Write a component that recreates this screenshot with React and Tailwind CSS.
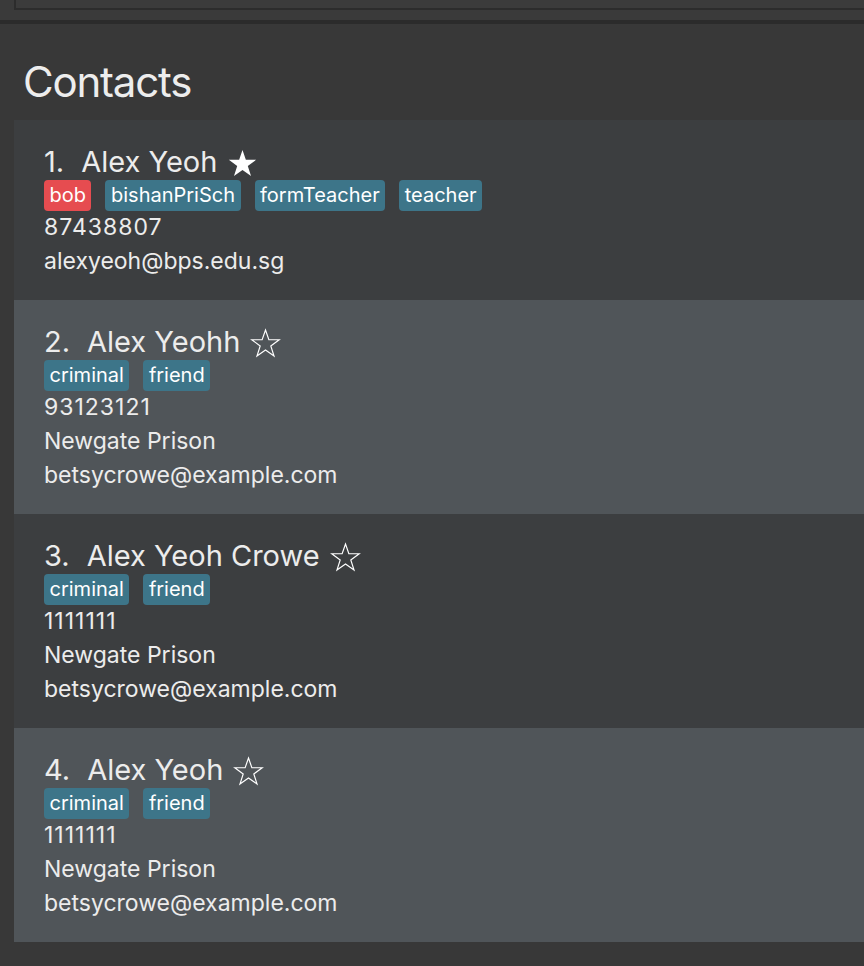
import React from "react";

const contacts = [
  {
    name: "Alex Yeoh",
    fav: true,
    tags: [
      { label: "bob", red: true },
      { label: "bishanPriSch" },
      { label: "formTeacher" },
      { label: "teacher" },
    ],
    phone: "87438807",
    email: "alexyeoh@bps.edu.sg",
  },
  {
    name: "Alex Yeohh",
    tags: [{ label: "criminal" }, { label: "friend" }],
    phone: "93123121",
    address: "Newgate Prison",
    email: "betsycrowe@example.com",
  },
  {
    name: "Alex Yeoh Crowe",
    tags: [{ label: "criminal" }, { label: "friend" }],
    phone: "1111111",
    address: "Newgate Prison",
    email: "betsycrowe@example.com",
  },
  {
    name: "Alex Yeoh",
    tags: [{ label: "criminal" }, { label: "friend" }],
    phone: "1111111",
    address: "Newgate Prison",
    email: "betsycrowe@example.com",
  },
];

function Star({ filled }) {
  return (
    <svg
      className="w-[31px] h-[31px] ml-[10px] mb-[1px]"
      viewBox="0 0 24 24"
      fill={filled ? "#ffffff" : "none"}
      stroke="#ffffff"
      strokeWidth={filled ? 0 : 0.9}
      strokeLinejoin="miter"
    >
      <path d="M12 1.5l2.6 7.6h8l-6.5 4.8 2.5 7.8L12 17l-6.6 4.7 2.5-7.8-6.5-4.8h8z" />
    </svg>
  );
}

function ContactCard({ c, index }) {
  const shade = index % 2 === 0 ? "bg-[#3c3e40]" : "bg-[#505559]";
  return (
    <div className={`${shade} pl-[30px] pt-[24px] pb-[22px] text-[#ececec]`}>
      {/* name row */}
      <div className="flex items-end h-[36px] text-[29px] leading-[36px]">
        <span>{index + 1}.</span>
        <span className="ml-[17px]">{c.name}</span>
        <Star filled={c.fav} />
      </div>

      {/* tags */}
      <div className="flex gap-[14px] h-[31px]">
        {c.tags.map((t) => (
          <span
            key={t.label}
            className={`${
              t.red ? "bg-[#e64c50]" : "bg-[#3d7589]"
            } rounded-[4px] px-[5.5px] text-[20px] leading-[31px] text-white`}
          >
            {t.label}
          </span>
        ))}
      </div>

      <div className="text-[23px] leading-[33.67px] tracking-[1px]">{c.phone}</div>
      {c.address && (
        <div className="text-[23px] leading-[33.67px]">{c.address}</div>
      )}
      <div className="text-[23px] leading-[33.67px]">{c.email}</div>
    </div>
  );
}

export default function App() {
  return (
    <div className="min-h-screen w-[864px] overflow-hidden bg-[#383838] font-['Inter',sans-serif]">
      {/* ------- top strip (end of the result box) ------- */}
      <div className="h-[10px] pl-[14px] bg-[#3a3a3a]">
        <div className="h-full border-l-2 border-b-2 border-[#2c2c2c] bg-[#3b3b3b]" />
      </div>
      <div className="h-[10px] bg-[#3a3a3a]" />
      <div className="h-[4px] bg-[#2b2b2b]" />

      {/* ------- heading ------- */}
      <div className="h-[96px] pt-[34px] pl-[23px]">
        <h1 className="text-[42px] leading-[48px] text-[#ededed] tracking-[-1.2px]">
          Contacts
        </h1>
      </div>

      {/* ------- list ------- */}
      <div className="pl-[14px]">
        {contacts.map((c, i) => (
          <ContactCard key={i} c={c} index={i} />
        ))}
      </div>
    </div>
  );
}
